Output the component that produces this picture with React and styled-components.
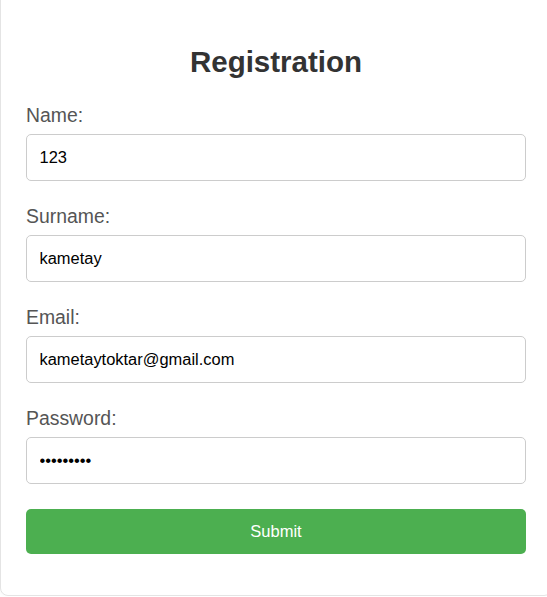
import React from "react";
import styled, { createGlobalStyle } from "styled-components";

const GlobalStyle = createGlobalStyle`
  html, body {
    margin: 0;
    padding: 0;
    background: #ffffff;
    overflow: hidden;
  }
  body {
    font-family: "Liberation Sans", Arial, sans-serif;
  }
  * {
    box-sizing: border-box;
  }
`;

const fields = [
  { name: "name", label: "Name:", type: "text", value: "123" },
  { name: "surname", label: "Surname:", type: "text", value: "kametay" },
  { name: "email", label: "Email:", type: "email", value: "kametaytoktar@gmail.com" },
  { name: "password", label: "Password:", type: "password", value: "123456789" },
];

const App = () => {
  const submit = (e) => {
    e.preventDefault();
  };

  return (
    <>
      <GlobalStyle />
      <Card>
        <Title>Registration</Title>
        <form onSubmit={submit}>
          {fields.map((f) => (
            <Field key={f.name}>
              <Label htmlFor={f.name}>{f.label}</Label>
              <Input id={f.name} name={f.name} type={f.type} defaultValue={f.value} />
            </Field>
          ))}
          <SubmitButton type="submit">Submit</SubmitButton>
        </form>
      </Card>
    </>
  );
};

export default App;

const Card = styled.div`
  width: 552px;
  margin-top: -20px;
  padding: 25px 25px 41px 25px;
  background: #ffffff;
  border: 1px solid #e4e4e4;
  border-radius: 8px;
  box-shadow: 0 0 4px rgba(0, 0, 0, 0.04);
`;

const Title = styled.h2`
  margin: 39px 0 24px 0;
  text-align: center;
  font-size: 29.5px;
  line-height: 34px;
  font-weight: bold;
  color: #333333;
`;

const Field = styled.div`
  display: flex;
  flex-direction: column;
  margin-bottom: 23px;
  &:last-of-type {
    margin-bottom: 25px;
  }
`;

const Label = styled.label`
  display: block;
  padding-top: 1px;
  margin-bottom: 8px;
  font-size: 19.4px;
  line-height: 22px;
  color: #555555;
`;

const Input = styled.input`
  width: 100%;
  height: 47px;
  padding: 0 12.5px;
  border: 1px solid #cccccc;
  border-radius: 5px;
  font-family: "Liberation Sans", Arial, sans-serif;
  font-size: 16.45px;
  color: #000000;
  background: #ffffff;
  outline: none;
`;

const SubmitButton = styled.button`
  display: block;
  width: 100%;
  height: 44.5px;
  border: none;
  border-radius: 5px;
  background: #4caf50;
  color: #ffffff;
  font-family: "Liberation Sans", Arial, sans-serif;
  font-size: 16.5px;
  cursor: pointer;
`;
